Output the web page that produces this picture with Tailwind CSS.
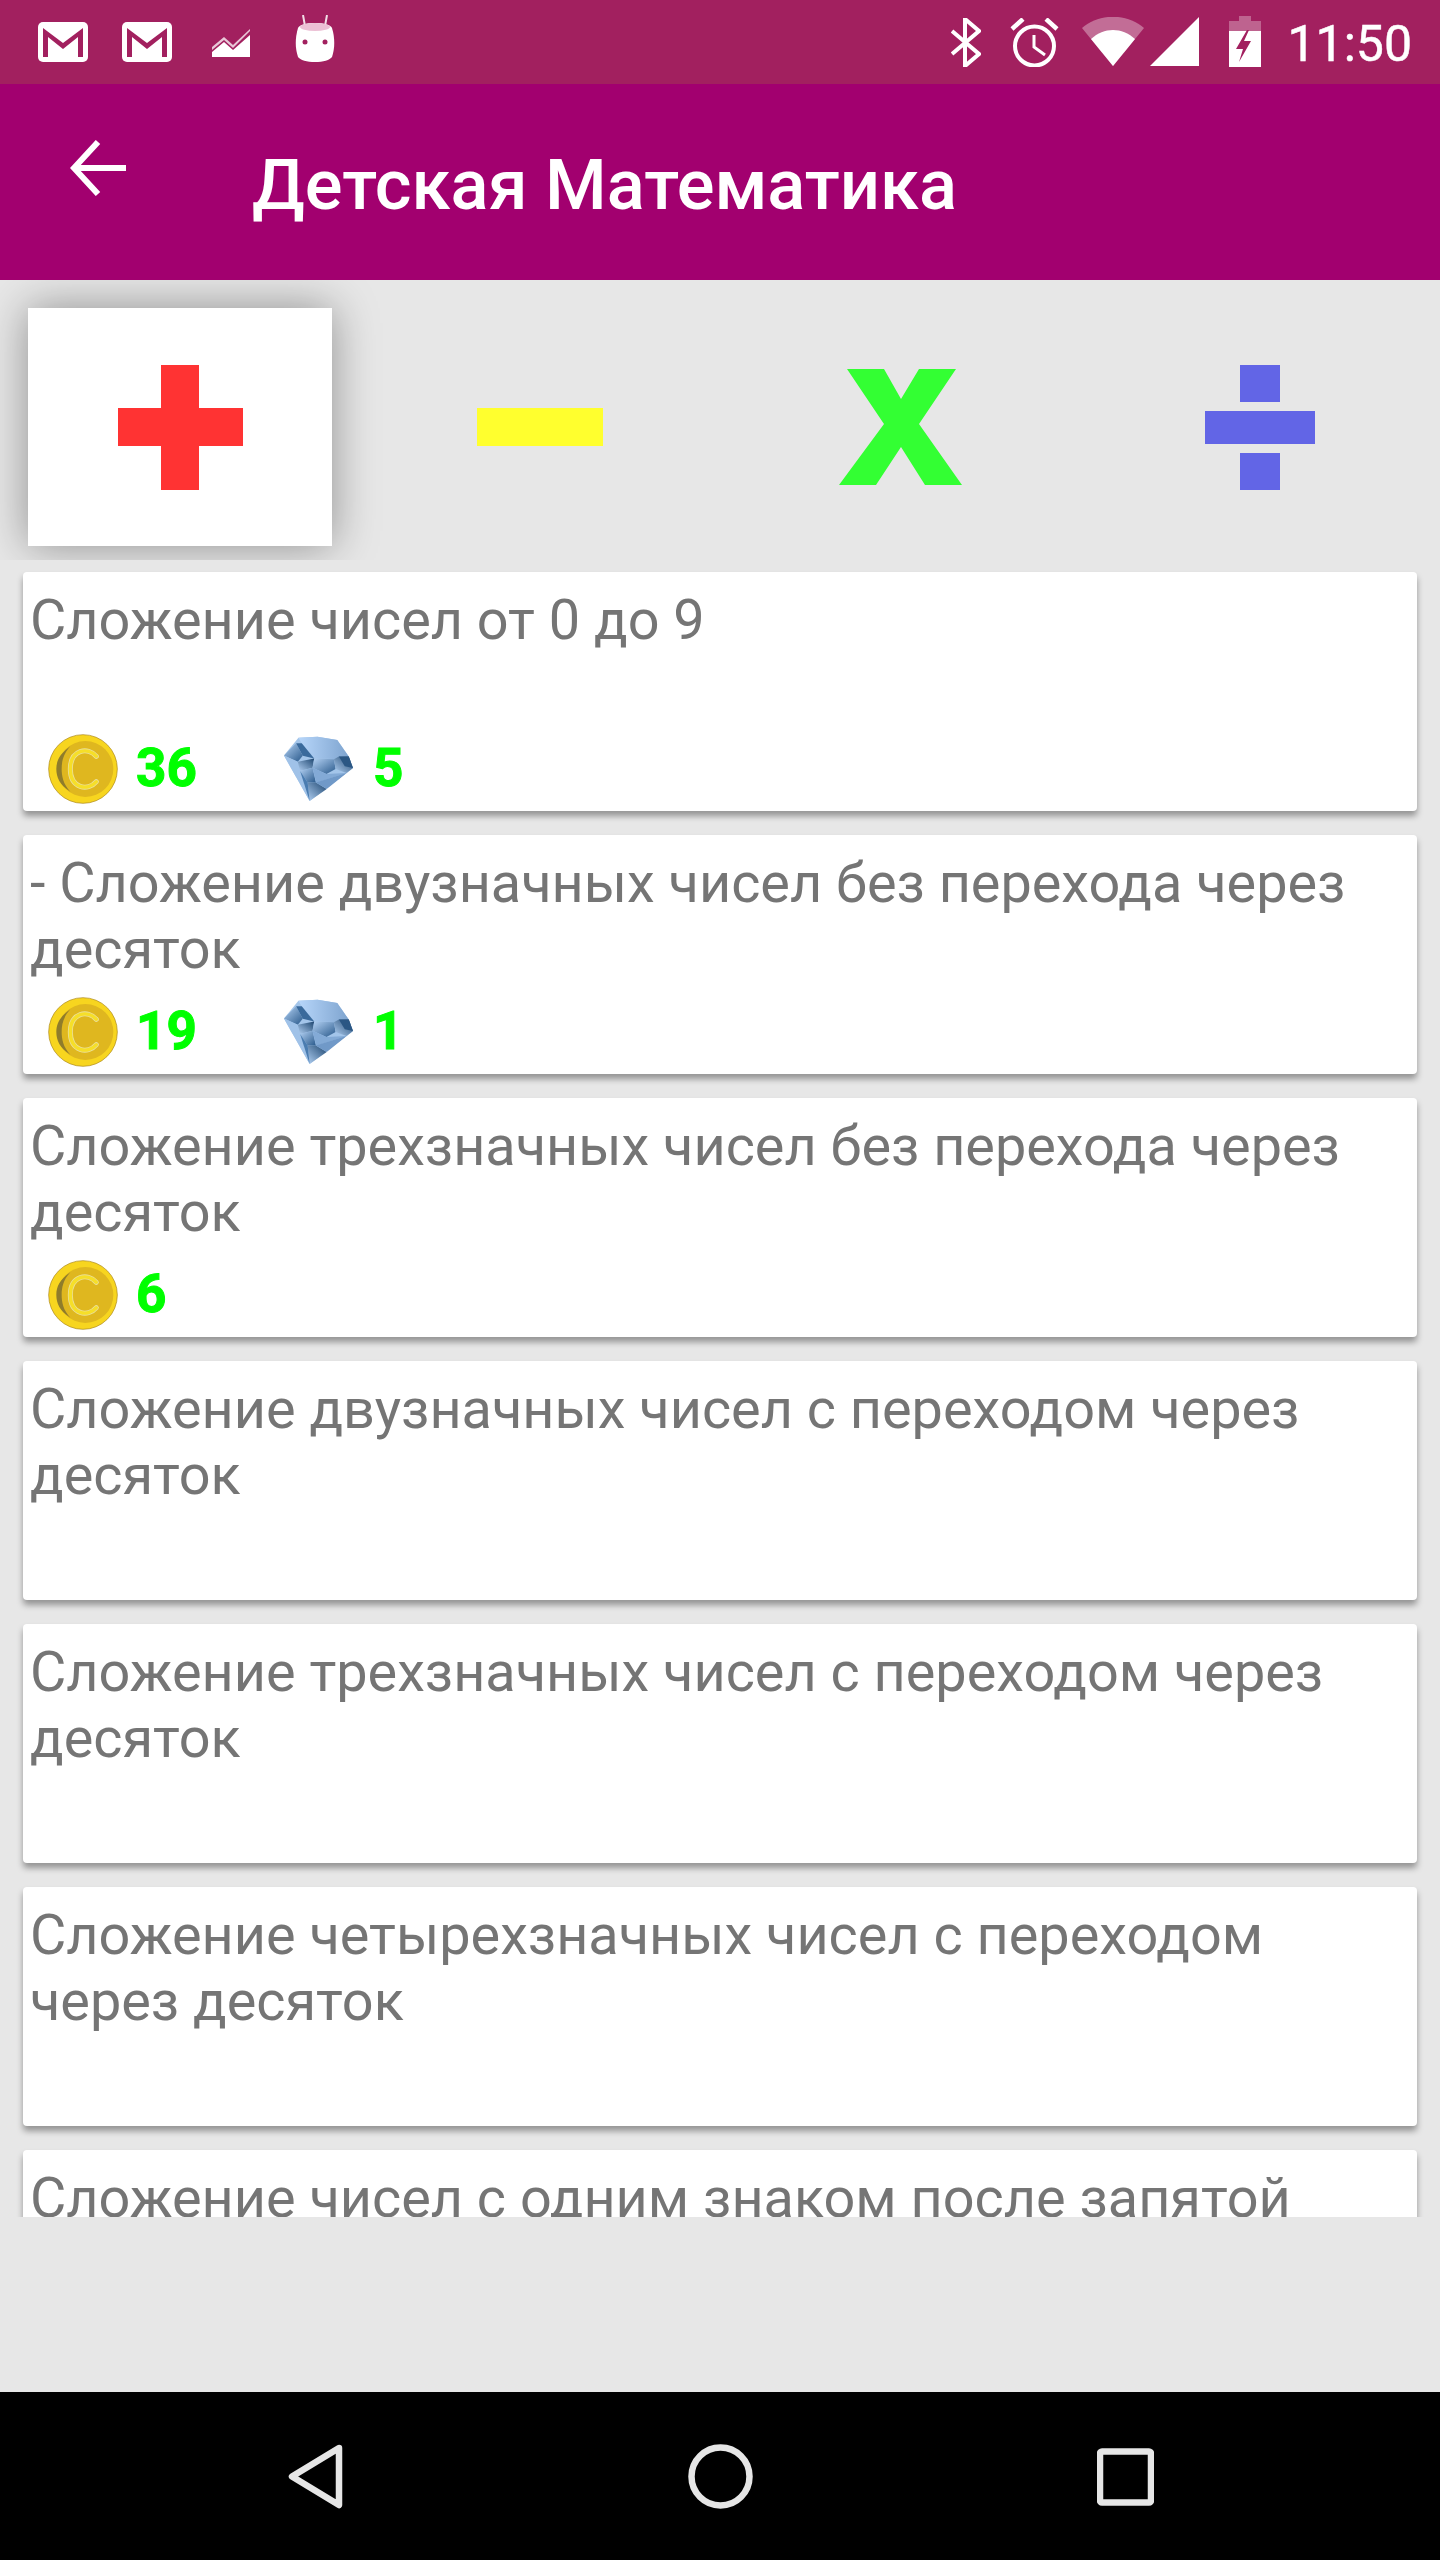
<!DOCTYPE html>
<html lang="ru">
<head>
<meta charset="UTF-8">
<title>Детская Математика</title>
<script src="https://cdn.jsdelivr.net/npm/@tailwindcss/browser@4"></script>
</head>
<body class="bg-[#e7e7e7]">
<div class="w-[1440px] h-[2560px] flex flex-col font-['Roboto',sans-serif] overflow-hidden">

  <!-- shared coin and diamond -->
  <svg width="0" height="0" class="absolute">
    <defs>
      <linearGradient id="g1" x1="0" y1="0" x2="1" y2="0"><stop offset="0" stop-color="#b7d6fa"/><stop offset="1" stop-color="#7ea4cf"/></linearGradient>
      <linearGradient id="g2" x1="0" y1="0" x2="1" y2="1"><stop offset="0" stop-color="#b4d2f4"/><stop offset="1" stop-color="#2a5a8c"/></linearGradient>
      <linearGradient id="g3" x1="1" y1="0" x2="0" y2="1"><stop offset="0" stop-color="#1d4670"/><stop offset="1" stop-color="#b0cff2"/></linearGradient>
      <symbol id="coin" viewBox="25 25 210 210">
        <circle cx="130" cy="130" r="103" fill="#f7d51f" stroke="#a98518" stroke-width="2"/>
        <path d="M75 45A103 103 0 0 0 75 215A103 103 0 0 1 75 45z" fill="#ffe60f"/>
        <circle cx="137" cy="130" r="84" fill="#dfb71f"/>
        <path d="M92 62C60 85 50 105 50 130s10 48 42 68C70 175 66 150 66 130s4-45 26-68z" fill="#8f7c2b"/>
        <path d="M170 92C145 62 92 72 92 130s53 68 78 38" fill="none" stroke="#eadf9a" stroke-width="15" stroke-linecap="round"/>
        <path d="M170 92C145 62 92 72 92 130s53 68 78 38" fill="none" stroke="#f6df28" stroke-width="10" stroke-linecap="round"/>
      </symbol>
      <symbol id="gem" viewBox="25 33 216 200">
        <path d="M28 92L72 38l58-3 60 10 35 50 13 35-132 100z" fill="#a3c5ea"/>
        <path d="M72 38l58-3 60 10 35 50-30 8-75-3-38-45z" fill="url(#g1)"/>
        <path d="M28 92L65 55l20 38-15 18z" fill="url(#g2)"/>
        <path d="M65 55l20 38 35 8-38-46z" fill="#3a6a9c"/>
        <path d="M28 92l42 19 36 119z" fill="#a0c2e8"/>
        <path d="M70 111l50-10-5 28-38 10z" fill="url(#g3)"/>
        <path d="M120 101l60 2 5 30-28 15-42-19z" fill="url(#g2)"/>
        <path d="M180 103l15-8 30 0 13 35-20 15-33-12z" fill="url(#g3)"/>
        <path d="M195 95l30 0 13 35-25-5z" fill="#2b5784"/>
        <path d="M77 139l38-10 10 45-25 0z" fill="url(#g2)"/>
        <path d="M115 129l42 19 61-3-92 30z" fill="#83aad6"/>
        <path d="M100 174l25 0 33 20-52 36z" fill="url(#g3)"/>
        <path d="M77 139l23 35 6 56z" fill="#4a7cb0"/>
        <path d="M125 174l93-29 20-15-80 64z" fill="#7099c8"/>
      </symbol>
    </defs>
  </svg>

  <!-- status bar -->
  <div class="h-[84px] bg-[#a2205f] flex items-start justify-between text-white">
    <div class="flex items-start pl-[38px] pt-[15px]">
      <svg class="mt-[7px]" width="50" height="40" viewBox="0 0 50 40"><rect width="50" height="40" rx="5" fill="#fff"/><path d="M5 35V6l20 15L45 6v29h-5V15L25 27 10 15v20z" fill="#a2205f"/></svg>
      <svg class="mt-[7px] ml-[34px]" width="50" height="40" viewBox="0 0 50 40"><rect width="50" height="40" rx="5" fill="#fff"/><path d="M5 35V6l20 15L45 6v29h-5V15L25 27 10 15v20z" fill="#a2205f"/></svg>
      <svg class="mt-[14px] ml-[40px]" width="38" height="28" viewBox="0 0 38 28"><path d="M0 28V18l12-10 9 8L38 0v2L21 19 12 11 0 21z" fill="#fff" opacity=".75"/><path d="M0 28v-5l12-10 9 8L38 6v22z" fill="#fff"/></svg>
      <svg class="ml-[45px]" width="40" height="47" viewBox="0 0 40 47"><path d="M8 0l2 11M32 0l-2 11" stroke="#fff" stroke-width="2" opacity=".85"/><path d="M20 8c9 0 16 2 17 5 3 10 3 20 0 29-2 3-9 5-17 5S5 45 3 42C0 33 0 23 3 13 4 10 11 8 20 8z" fill="#fff"/><ellipse cx="20" cy="12" rx="15" ry="4" fill="#ecc0d5"/><circle cx="10" cy="27" r="2.500" fill="#a2205f"/><circle cx="30" cy="27" r="2.500" fill="#a2205f"/></svg>
    </div>
    <div class="flex items-start pr-[28px] pt-[16px]">
      <svg class="mt-[2px]" width="30" height="49" viewBox="0 0 30 49"><path d="M1 13l27 23-14 12V1l14 12L1 36" fill="none" stroke="#fff" stroke-width="4"/></svg>
      <svg class="mt-[2px] ml-[29px]" width="49" height="49" viewBox="0 0 49 49"><circle cx="24.500" cy="28" r="19.500" fill="none" stroke="#fff" stroke-width="4"/><path d="M24 17v12l11 8" fill="none" stroke="#fff" stroke-width="3"/><path d="M2 11L13 1M47 11L36 1" stroke="#fff" stroke-width="4.500"/></svg>
      <svg class="mt-[1px] ml-[23px]" width="62" height="49" viewBox="0 0 62 49"><path d="M0 11C17-4 45-4 62 11L31 49z" fill="#fff" opacity=".35"/><path d="M9 22C22 10 40 10 53 22L31 49z" fill="#fff"/></svg>
      <svg class="mt-[1px] ml-[6px]" width="49" height="49" viewBox="0 0 49 49"><path d="M49 0v49H0z" fill="#fff"/></svg>
      <svg class="ml-[30px]" width="32" height="51" viewBox="0 0 32 51"><path d="M10 0h12v5h10v10H0V5h10z" fill="#fff" opacity=".3"/><path d="M0 15h32v36H0z" fill="#fff"/><path d="M18 14L7 33h7l-4 13 12-21h-7l5-11z" fill="#a2205f"/></svg>
      <span class="ml-[26px] text-[50px] leading-[56px] [-webkit-text-stroke:0.5px_#fff]">11:50</span>
    </div>
  </div>

  <!-- toolbar -->
  <div class="h-[196px] bg-[#a2006f] flex items-start text-white">
    <svg class="ml-[70px] mt-[56px]" width="56" height="56" viewBox="0 0 56 56"><path d="M28 2L4 28l24 26M4 28h52" fill="none" stroke="#fff" stroke-width="6"/></svg>
    <h1 class="ml-[126px] mt-[55px] text-[70.5px] leading-[92px] font-medium">Детская Математика</h1>
  </div>

  <!-- operation tabs -->
  <div class="h-[280px] grid grid-cols-4 overflow-hidden">
    <div class="flex justify-center pt-[28px]">
      <div class="w-[304px] h-[238px] bg-white shadow-[0_0_42px_rgba(0,0,0,0.38)] flex items-center justify-center">
        <svg width="125" height="125" viewBox="0 0 125 125"><path d="M43 0h38v43h44v38H81v44H43V81H0V43h43z" fill="#ff3333"/></svg>
      </div>
    </div>
    <div class="flex justify-center items-center pt-[14px]">
      <div class="w-[126px] h-[38px] bg-[#ffff2e]"></div>
    </div>
    <div class="flex justify-center items-center pt-[14px]">
      <svg width="123" height="116" viewBox="0 0 123 116"><path d="M8 0h37l17 30L80 0h37L80 55l43 61H86L62 78 37 116H0l45-61z" fill="#33ff33"/></svg>
    </div>
    <div class="flex flex-col justify-center items-center pt-[14px]">
      <div class="w-[40px] h-[37px] bg-[#6265e6]"></div>
      <div class="w-[110px] h-[33px] bg-[#6265e6] mt-[9px]"></div>
      <div class="w-[40px] h-[37px] bg-[#6265e6] mt-[9px]"></div>
    </div>
  </div>

  <!-- levels -->
  <div class="h-[1657px] overflow-hidden px-[23px] pt-[12px] flex flex-col gap-[24px]">

    <div class="h-[239px] shrink-0 bg-white rounded-[4px] shadow-[0_5px_6px_rgba(0,0,0,0.36)] px-[7px] pt-[15px] flex flex-col justify-between text-[#757575]">
      <p class="text-[55.8px] leading-[66px]">Сложение чисел от 0 до 9</p>
      <div class="flex items-center h-[68px] mb-[8px] pl-[18px] font-bold text-[#00ff00] text-[53px] [-webkit-text-stroke:1px_#00ff00]">
        <svg width="70" height="70"><use href="#coin"/></svg>
        <span class="w-[165px] pl-[18px]">36</span>
        <svg width="71" height="66"><use href="#gem"/></svg>
        <span class="pl-[19px]">5</span>
      </div>
    </div>

    <div class="h-[239px] shrink-0 bg-white rounded-[4px] shadow-[0_5px_6px_rgba(0,0,0,0.36)] px-[7px] pt-[15px] flex flex-col justify-between text-[#757575]">
      <p class="text-[55.8px] leading-[66px]">- Сложение двузначных чисел без перехода через десяток</p>
      <div class="flex items-center h-[68px] mb-[8px] pl-[18px] font-bold text-[#00ff00] text-[53px] [-webkit-text-stroke:1px_#00ff00]">
        <svg width="70" height="70"><use href="#coin"/></svg>
        <span class="w-[165px] pl-[18px]">19</span>
        <svg width="71" height="66"><use href="#gem"/></svg>
        <span class="pl-[19px]">1</span>
      </div>
    </div>

    <div class="h-[239px] shrink-0 bg-white rounded-[4px] shadow-[0_5px_6px_rgba(0,0,0,0.36)] px-[7px] pt-[15px] flex flex-col justify-between text-[#757575]">
      <p class="text-[55.8px] leading-[66px]">Сложение трехзначных чисел без перехода через десяток</p>
      <div class="flex items-center h-[68px] mb-[8px] pl-[18px] font-bold text-[#00ff00] text-[53px] [-webkit-text-stroke:1px_#00ff00]">
        <svg width="70" height="70"><use href="#coin"/></svg>
        <span class="pl-[18px]">6</span>
      </div>
    </div>

    <div class="h-[239px] shrink-0 bg-white rounded-[4px] shadow-[0_5px_6px_rgba(0,0,0,0.36)] px-[7px] pt-[15px] text-[#757575]">
      <p class="text-[55.8px] leading-[66px]">Сложение двузначных чисел с переходом через десяток</p>
    </div>
    <div class="h-[239px] shrink-0 bg-white rounded-[4px] shadow-[0_5px_6px_rgba(0,0,0,0.36)] px-[7px] pt-[15px] text-[#757575]">
      <p class="text-[55.8px] leading-[66px]">Сложение трехзначных чисел с переходом через десяток</p>
    </div>
    <div class="h-[239px] shrink-0 bg-white rounded-[4px] shadow-[0_5px_6px_rgba(0,0,0,0.36)] px-[7px] pt-[15px] text-[#757575]">
      <p class="text-[55.8px] leading-[66px]">Сложение четырехзначных чисел с переходом через десяток</p>
    </div>
    <div class="h-[239px] shrink-0 bg-white rounded-[4px] shadow-[0_5px_6px_rgba(0,0,0,0.36)] px-[7px] pt-[15px] text-[#757575]">
      <p class="text-[55.8px] leading-[66px]">Сложение чисел с одним знаком после запятой</p>
    </div>
  </div>

  <div class="flex-1"></div>

  <!-- nav bar -->
  <div class="h-[168px] bg-black flex items-start pt-[52px]">
    <svg class="ml-[287px]" width="56" height="65" viewBox="0 0 56 65"><path d="M52 4L5 32.500 52 61z" fill="none" stroke="#e6e6e6" stroke-width="6.500" stroke-linejoin="round"/></svg>
    <svg class="ml-[345px]" width="65" height="65" viewBox="0 0 65 65"><circle cx="32.500" cy="32.500" r="29" fill="none" stroke="#e6e6e6" stroke-width="6.500"/></svg>
    <svg class="ml-[344px] mt-[4px]" width="57" height="58" viewBox="0 0 57 58"><rect x="3" y="3.500" width="51" height="51" rx="2" fill="none" stroke="#e6e6e6" stroke-width="6.500"/></svg>
  </div>
</div>
</body>
</html>
